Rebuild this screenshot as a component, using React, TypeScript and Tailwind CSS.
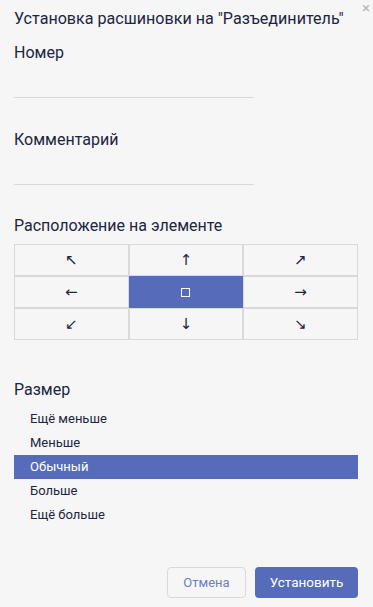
import React, { useState } from 'react';

const positions = ['↖', '↑', '↗', '←', 'center', '→', '↙', '↓', '↘'];
const sizes = ['Ещё меньше', 'Меньше', 'Обычный', 'Больше', 'Ещё больше'];

const App: React.FC = () => {
  const [pos, setPos] = useState(4);
  const [size, setSize] = useState(2);

  return (
    <div
      className="relative w-[373px] h-[607px] bg-[#f6f6f6] text-[#1c2541] px-[14px] pt-[9px]"
      style={{ fontFamily: 'Roboto, "Noto Sans", sans-serif' }}
    >
      <button className="absolute right-[3px] top-[1px] text-[#b3b6bc] text-[15px] leading-none">×</button>

      <h2 className="text-[16.1px] leading-[20px] whitespace-nowrap">Установка расшиновки на "Разъединитель"</h2>

      <div className="mt-[14px]">
        <label className="block text-[16px] leading-[20px]">Номер</label>
        <input className="block w-[240px] h-[24px] mt-[11px] bg-transparent border-b border-[#d9d9d9] outline-none text-sm" />
      </div>

      <div className="mt-[32px]">
        <label className="block text-[16px] leading-[20px]">Комментарий</label>
        <input className="block w-[240px] h-[24px] mt-[11px] bg-transparent border-b border-[#d9d9d9] outline-none text-sm" />
      </div>

      <div className="mt-[31px]">
        <div className="text-[16px] leading-[20px]">Расположение на элементе</div>
        <div className="grid grid-cols-3 mt-[8px] w-[344px]">
          {positions.map((p, i) => (
            <button
              key={i}
              onClick={() => setPos(i)}
              className={`h-[32px] flex items-center justify-center border text-[15px] leading-none font-['DejaVu_Sans',sans-serif] ${
                pos === i ? 'bg-[#566cbb] border-[#566cbb] text-white' : 'border-[#d9d9d9]'
              }`}
            >
              {p === 'center' ? <span className="block w-[9px] h-[9px] border-[1.5px] border-white" /> : p}
            </button>
          ))}
        </div>
      </div>

      <div className="mt-[40px]">
        <div className="text-[16px] leading-[20px]">Размер</div>
        <div className="mt-[7px] w-[344px]">
          {sizes.map((s, i) => (
            <div
              key={s}
              onClick={() => setSize(i)}
              className={`h-[24px] flex items-center pl-[16px] text-[13px] cursor-pointer ${
                size === i ? 'bg-[#566cbb] text-white' : ''
              }`}
            >
              {s}
            </div>
          ))}
        </div>
      </div>

      <div className="absolute right-[15px] bottom-[9px] flex gap-[9px]">
        <button className="w-[79px] h-[31px] rounded-[4px] border border-[#d9d9d9] text-[13px] text-[#6b7fc9]">
          Отмена
        </button>
        <button className="w-[103px] h-[31px] rounded-[4px] bg-[#566cbb] text-white text-[13.5px]">
          Установить
        </button>
      </div>
    </div>
  );
};

export default App;
